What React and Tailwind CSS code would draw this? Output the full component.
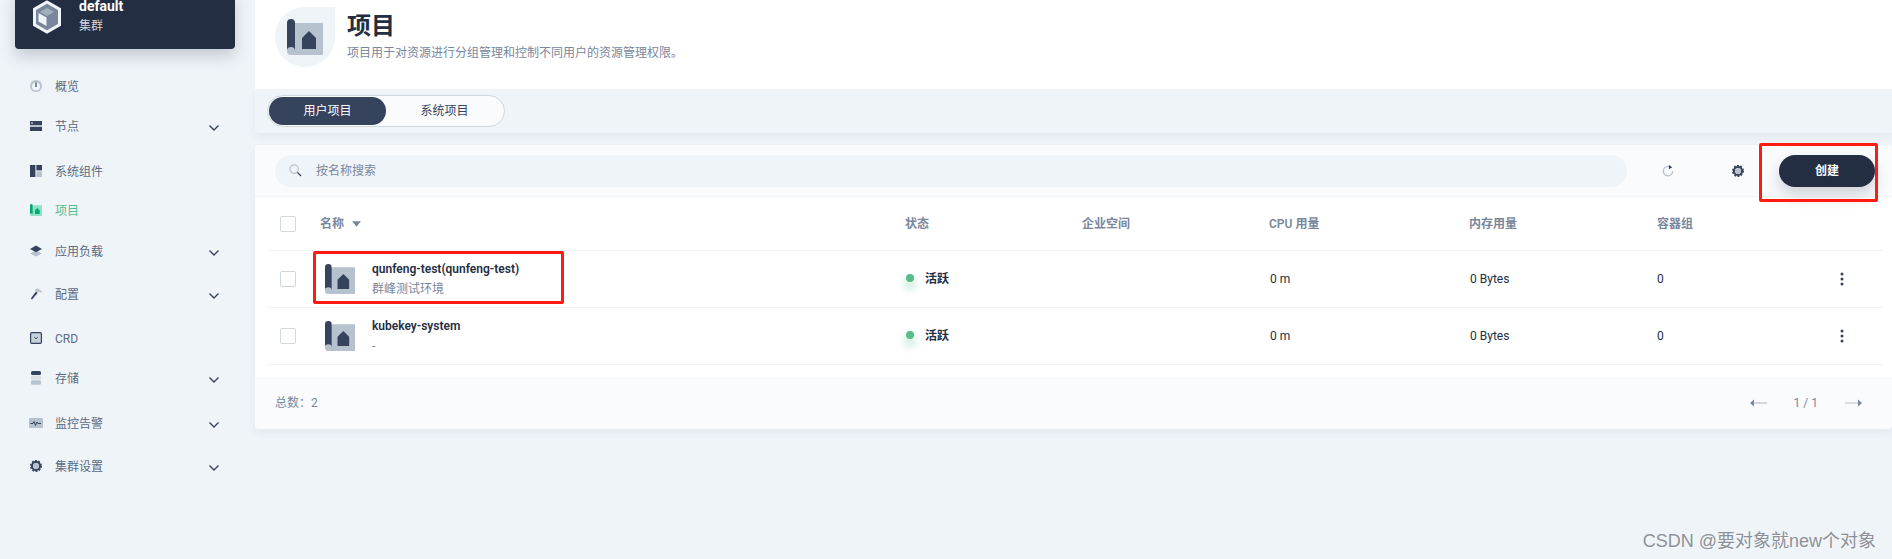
const FONT = "font-['Roboto','Noto_Sans_CJK_SC',sans-serif]";
const ROW = "grid grid-cols-[40px_585px_177px_187px_200px_188px_1fr] items-center";

function ProjectIcon({ className, dark = "#36435c", light = "#b6c2cd" }) {
  return (
    <svg viewBox="0 0 36 36" className={className}>
      <path d="M8 4h28v32H4a4 4 0 0 1-4-4z" fill={light} />
      <path d="M0 4a4 4 0 0 1 8 0v28a4 4 0 0 0-8 0z" fill={dark} />
      <path d="M15 19l7-7 7 7v11H15z" fill={dark} />
    </svg>
  );
}

function Chevron() {
  return (
    <svg viewBox="0 0 12 8" className="h-2 w-3 shrink-0">
      <path d="M1.5 1.5L6 6l4.5-4.5" fill="none" stroke="#36435c" strokeWidth="1.4" />
    </svg>
  );
}

function Gear({ className }) {
  return (
    <svg viewBox="0 0 24 24" className={className}>
      <circle cx="12" cy="12" r="8" fill="none" stroke="#36435c" strokeWidth="4.400" />
      <circle cx="12" cy="12" r="10.500" fill="none" stroke="#36435c" strokeWidth="3" strokeDasharray="3.800 2.800" />
      <circle cx="12" cy="12" r="5.800" fill="#b6c2cd" />
    </svg>
  );
}

const navIcons = {
  overview: (
    <svg viewBox="0 0 12 12" className="h-3 w-3">
      <circle cx="6" cy="6" r="6" fill="#b6c2cd" />
      <circle cx="6" cy="6.5" r="4" fill="#eff4f9" />
      <rect x="5.4" y="2.5" width="1.2" height="4.5" fill="#36435c" />
    </svg>
  ),
  nodes: (
    <svg viewBox="0 0 12 12" className="h-3 w-3">
      <rect y="1" width="12" height="4" fill="#36435c" />
      <rect y="7" width="12" height="4" fill="#36435c" />
      <rect y="5" width="12" height="2" fill="#b6c2cd" />
      <rect x="1" y="2.5" width="2" height="1" fill="#eff4f9" />
    </svg>
  ),
  components: (
    <svg viewBox="0 0 12 12" className="h-3 w-3">
      <rect width="5.4" height="12" fill="#36435c" />
      <rect x="6.4" width="5.6" height="5.4" fill="#36435c" />
      <rect x="6.4" y="6.4" width="5.6" height="5.6" fill="#b6c2cd" />
    </svg>
  ),
  project: <ProjectIcon className="h-3 w-3" dark="#00aa72" light="#90e0c5" />,
  workload: (
    <svg viewBox="0 0 12 12" className="h-3 w-3">
      <path d="M6 5.5L0 8.5l6 3 6-3z" fill="#b6c2cd" />
      <path d="M6 0.5L0 4l6 3.2L12 4z" fill="#36435c" />
    </svg>
  ),
  config: (
    <svg viewBox="0 0 12 12" className="h-3 w-3">
      <path d="M6 3.5l1.6 1.4L2 11.6.8 10.6z" fill="#36435c" />
      <path d="M4.8 2L7.5.3 12 3.5l-1 1.2-2.6-1.2-1 1.3z" fill="#b6c2cd" />
    </svg>
  ),
  crd: (
    <svg viewBox="0 0 12 12" className="h-3 w-3">
      <rect x=".6" y=".6" width="10.8" height="10.8" rx="1.2" fill="#c7d1da" stroke="#36435c" strokeWidth="1.2" />
      <path d="M4.3 5.2L6 6.8l1.7-1.6" fill="none" stroke="#36435c" />
    </svg>
  ),
  storage: (
    <svg viewBox="0 0 12 14" className="h-[14px] w-3">
      <rect x="1" y="0" width="10" height="4" rx="1.6" fill="#36435c" />
      <rect x="1" y="4.6" width="10" height="4" fill="#d8e0e6" />
      <rect x="1" y="9.2" width="10" height="4.6" rx="1.6" fill="#b6c2cd" />
    </svg>
  ),
  monitor: (
    <svg viewBox="0 0 14 10" className="-ml-[1px] h-[10px] w-[14px]">
      <rect width="14" height="10" rx="1.2" fill="#b6c2cd" />
      <path d="M1.5 5.5h2.5l1-2 1.5 4 1.5-3.5 1 1.5h3" fill="none" stroke="#36435c" strokeWidth="1" />
    </svg>
  ),
  settings: <Gear className="h-3 w-3" />,
};

const navItems = [
  { icon: "overview", label: "概览", cls: "" },
  { icon: "nodes", label: "节点", more: true, cls: "mt-2" },
  { icon: "components", label: "系统组件", cls: "mt-[13px]" },
  { icon: "project", label: "项目", active: true, cls: "mt-[7px]" },
  { icon: "workload", label: "应用负载", more: true, cls: "mt-[9px]" },
  { icon: "config", label: "配置", more: true, cls: "mt-[11px]" },
  { icon: "crd", label: "CRD", cls: "mt-3" },
  { icon: "storage", label: "存储", more: true, cls: "mt-2" },
  { icon: "monitor", label: "监控告警", more: true, cls: "mt-[13px]" },
  { icon: "settings", label: "集群设置", more: true, cls: "mt-[11px]" },
];

const projects = [
  { name: "qunfeng-test(qunfeng-test)", desc: "群峰测试环境" },
  { name: "kubekey-system", desc: "-" },
];

function Sidebar() {
  return (
    <aside className="w-[255px] shrink-0 px-[15px]">
      <div className="-mt-[11px] flex h-[60px] w-[220px] items-start gap-[17px] rounded-[4px] bg-[#242e42] pl-[17px] pt-[7px] shadow-[0_8px_16px_0_rgba(36,46,66,0.2)]">
        <svg viewBox="0 0 30 34" className="mt-[4px] h-[34px] w-[30px] shrink-0">
          <path d="M15 2l12.5 7.2v15.6L15 32 2.500 24.800V9.200z" fill="#79879c" stroke="#eff4f9" strokeWidth="3" />
          <path d="M6.500 13l8 4.500V26l-8-4.500z" fill="#eff4f9" />
          <path d="M15 8l7 4-7 4-7-4z" fill="#a3afbb" />
        </svg>
        <div>
          <div className="text-[14px] leading-[20px] font-bold text-white">default</div>
          <div className="mt-[2px] text-[12px] leading-[16px] text-[#d1d7df]">集群</div>
        </div>
      </div>

      <nav className="mt-[21px]">
        {navItems.map((item) => (
          <div key={item.label} className={`flex h-8 items-center pl-[15px] pr-[20px] ${item.cls}`}>
            <span className="flex w-[25px] shrink-0 items-center">{navIcons[item.icon]}</span>
            <span className={`mt-[1px] flex-1 text-[12px] ${item.active ? "text-[#55bc8a]" : "text-[#5b6b82]"}`}>
              {item.label}
            </span>
            {item.more && (
              <span className="mt-[3px] flex">
                <Chevron />
              </span>
            )}
          </div>
        ))}
      </nav>
    </aside>
  );
}

function Checkbox() {
  return <span className="block h-4 w-4 rounded-[2px] border border-[#d1d7df] bg-white" />;
}

function ProjectRow({ project }) {
  return (
    <div className={`${ROW} h-[57px] border-t border-[#eff4f9] pl-[13px]`}>
      <Checkbox />
      <div className="flex items-center pl-[5px]">
        <ProjectIcon className="h-[30px] w-[30px] shrink-0" />
        <div className="ml-[17px] -mt-[1px]">
          <div className="text-[12px] leading-[20px] font-semibold text-[#242e42]">{project.name}</div>
          <div className="mt-[1px] text-[12px] leading-[18px] text-[#79879c]">{project.desc}</div>
        </div>
      </div>
      <div className="flex items-center text-[12px] font-semibold text-[#242e42]">
        <span className="mb-[3px] ml-[1px] h-2 w-2 rounded-full bg-[#55bc8a] shadow-[0_6px_8px_2px_rgba(85,188,138,0.3)]" />
        <span className="ml-[11px]">活跃</span>
      </div>
      <div />
      <div className="pl-[1px] text-[12px] text-[#242e42]">0 m</div>
      <div className="pl-[1px] text-[12px] text-[#242e42]">0 Bytes</div>
      <div className="flex items-center justify-between pr-[39px] text-[12px] text-[#242e42]">
        <span>0</span>
        <svg viewBox="0 0 4 14" className="h-[14px] w-1">
          <circle cx="2" cy="2" r="1.500" fill="#36435c" />
          <circle cx="2" cy="7" r="1.500" fill="#36435c" />
          <circle cx="2" cy="12" r="1.500" fill="#36435c" />
        </svg>
      </div>
    </div>
  );
}

export default function App() {
  return (
    <div className={`relative flex h-[559px] w-[1892px] overflow-hidden bg-[#eff4f9] ${FONT}`}>
      <Sidebar />

      <main className="min-w-0 flex-1">
        <header className="flex h-[89px] bg-white pl-5 pt-[7px]">
          <div className="flex h-[60px] w-[60px] items-center justify-center rounded-full rounded-tr-none bg-[#eff4f9]">
            <ProjectIcon className="h-9 w-9" />
          </div>
          <div className="ml-3">
            <h1 className="mt-[3px] text-[24px] leading-[32px] font-bold text-[#242e42]">项目</h1>
            <p className="mt-[1px] text-[12px] leading-[20px] text-[#79879c]">
              项目用于对资源进行分组管理和控制不同用户的资源管理权限。
            </p>
          </div>
        </header>

        <div className="flex h-[44px] items-start rounded-bl-[4px] bg-[#eff4f9] pl-3 pt-[6px] shadow-[0_4px_8px_0_rgba(36,46,66,0.06)]">
          <div className="flex h-8 w-[238px] items-center rounded-full border border-[#d1d7df] bg-[#f9fbfd] p-[1px] text-[12px]">
            <span className="flex h-[28px] w-[117px] items-center justify-center rounded-full bg-[#36435c] text-white">
              用户项目
            </span>
            <span className="flex flex-1 items-center justify-center text-[#36435c]">系统项目</span>
          </div>
        </div>

        <section className="mt-3 overflow-hidden rounded-[4px] bg-white shadow-[0_4px_8px_0_rgba(36,46,66,0.06)]">
          <div className="flex h-[52px] items-center border-b border-[#eff4f9] bg-[#f9fbfd] pl-5 pr-4">
            <div className="flex h-8 w-[1352px] items-center rounded-full bg-[#eff4f9] pl-[14px] text-[12px] text-[#79879c]">
              <svg viewBox="0 0 14 14" className="h-[13px] w-[13px]">
                <circle cx="5.500" cy="5.500" r="4.500" fill="none" stroke="#b6c2cd" strokeWidth="1.300" />
                <path d="M9 9l4 4" stroke="#36435c" strokeWidth="1.400" />
              </svg>
              <span className="ml-[14px]">按名称搜索</span>
            </div>
            <svg viewBox="0 0 14 14" className="ml-[35px] h-3 w-3">
              <path d="M9.500 2.200A5.500 5.500 0 1 0 12.500 7" fill="none" stroke="#b6c2cd" strokeWidth="1.500" />
              <path d="M8 0l4 2.500L8 5z" fill="#36435c" />
            </svg>
            <Gear className="ml-[58px] h-3 w-3" />
            <button className="ml-[35px] flex h-8 w-24 items-center justify-center rounded-full bg-[#242e42] text-[12px] font-semibold text-white shadow-[0_8px_16px_0_rgba(36,46,66,0.2)]">
              创建
            </button>
          </div>

          <div className="ml-3 mr-[9px] border-b border-[#eff4f9]">
            <div className={`${ROW} h-[53px] pl-[13px] text-[12px] font-semibold text-[#79879c]`}>
              <Checkbox />
              <div className="flex items-center gap-[8px]">
                名称
                <svg viewBox="0 0 10 6" className="h-[6px] w-[9px]">
                  <path d="M0 0h10L5 6z" fill="#79879c" />
                </svg>
              </div>
              <div>状态</div>
              <div>企业空间</div>
              <div>CPU 用量</div>
              <div>内存用量</div>
              <div>容器组</div>
            </div>
            {projects.map((project) => (
              <ProjectRow key={project.name} project={project} />
            ))}
          </div>
          <div className="mt-[12px] flex h-[52px] items-center justify-between bg-[#f9fbfd] pl-5 pr-[30px] text-[12px] text-[#79879c]">
            <span>总数：2</span>
            <div className="flex items-center">
              <svg viewBox="0 0 17 8" className="h-2 w-[17px]">
                <path d="M4 4h13" stroke="#b6c2cd" strokeWidth="1.200" />
                <path d="M0 4l4-3.500v7z" fill="#79879c" />
              </svg>
              <span className="mx-[27px]">1 / 1</span>
              <svg viewBox="0 0 17 8" className="h-2 w-[17px]">
                <path d="M0 4h13" stroke="#b6c2cd" strokeWidth="1.200" />
                <path d="M17 4l-4-3.500v7z" fill="#79879c" />
              </svg>
            </div>
          </div>
        </section>
      </main>

      {/* annotations drawn on top of the screenshot */}
      <div className="absolute left-[313px] top-[251px] h-[53px] w-[251px] rounded-[2px] border-[3px] border-[#ff1a12]" />
      <div className="absolute left-[1759px] top-[143px] h-[59px] w-[119px] rounded-[2px] border-[3px] border-[#ff1a12]" />
      <div className="absolute right-[16px] top-[529px] font-['Liberation_Sans','Noto_Sans_CJK_SC',sans-serif] text-[18px] leading-[24px] text-[#8d9197] [text-shadow:1px_1px_1px_rgba(255,255,255,0.6)]">
        CSDN @要对象就new个对象
      </div>
    </div>
  );
}
